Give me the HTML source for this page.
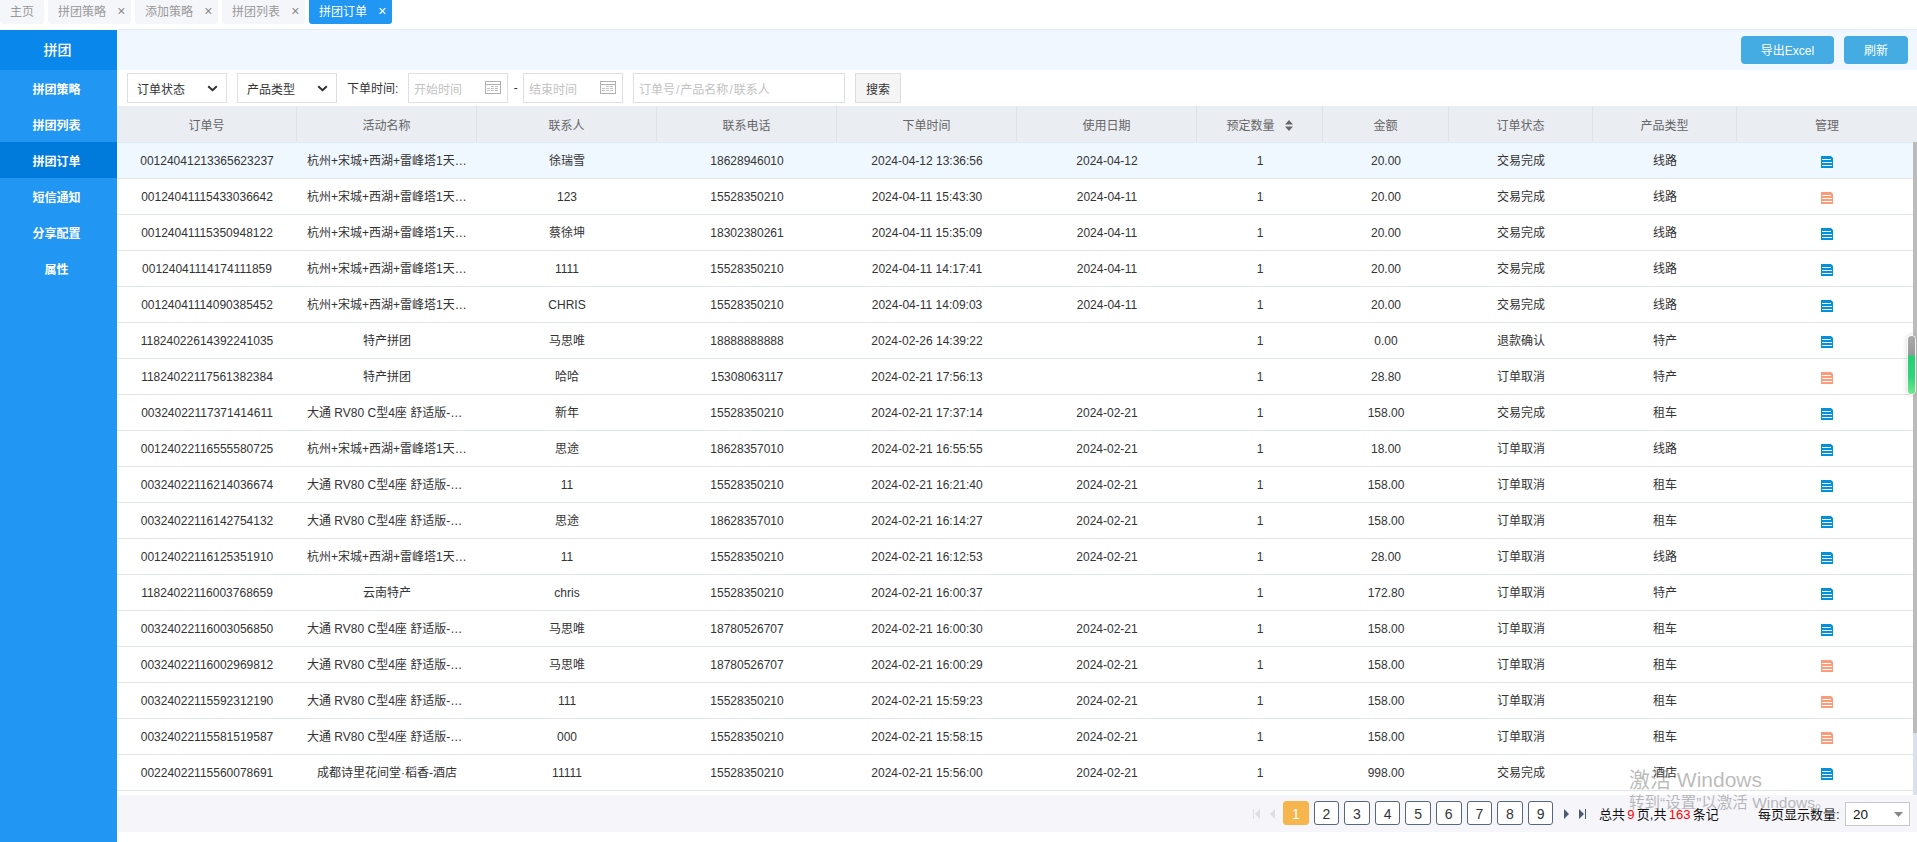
<!DOCTYPE html>
<html lang="zh-CN">
<head>
<meta charset="utf-8">
<title>拼团订单</title>
<style>
*{box-sizing:border-box;margin:0;padding:0}
html,body{width:1917px;height:842px;overflow:hidden;background:#fff}
body{font-family:"Liberation Sans","Noto Sans CJK SC",sans-serif;font-size:12px;color:#333;position:relative}
.abs{position:absolute}
/* tabs */
.tabs{position:absolute;left:0;top:0;height:24px;width:1917px}
.tab{position:absolute;top:0;height:24px;width:83px;background:#f5f6fa;color:#999;border-radius:0 0 3px 3px;line-height:24px;padding-left:10px;white-space:nowrap}
.tab .x{position:absolute;right:5.5px;top:0;font-size:14px;color:#8a8a8a;line-height:22px}
.tab.on{background:#2196f3;color:#fff}
.tab.on .x{color:#fff}
/* sidebar */
.side{position:absolute;left:0;top:30px;width:117px;height:812px;background:#2196f3;color:#fff;text-align:center}
.side .hd{height:40px;line-height:41px;font-size:14px;font-weight:500;background:#0a87eb;padding-right:2px}
.side .it{height:36px;line-height:41px;font-weight:bold;font-size:12px;padding-right:4px}
.side .it.on{background:#007adb}
/* top bar */
.top{position:absolute;left:117px;top:29px;width:1800px;height:41px;background:#f0f7ff;border-top:1px solid #e3ebf6}
.btn{position:absolute;top:6px;height:28px;line-height:31px;background:#44ace3;color:#fff;border-radius:4px;text-align:center}
/* filter */
.sel,.inp,.sbtn{position:absolute;top:73px;height:30px;border:1px solid #dcdfe5;background:#fff;line-height:32px}
.sel{padding-left:9px;color:#333}
.inp{padding-left:5px;color:#c2c2c2;line-height:32px}
.sbtn{background:#f5f5f5;border-color:#ddd;text-align:center;color:#333}
.lbl{position:absolute;top:73px;line-height:32px;color:#333}
/* table */
.thead{position:absolute;left:117px;top:106px;width:1800px;height:36px;background:#eaedf2}
.thead div{position:absolute;top:0;height:36px;line-height:41px;text-align:center;color:#666;border-right:1px solid #dfe2e8}
.tb{position:absolute;left:117px;top:142px;width:1800px;height:653px;overflow:hidden;border-top:1px solid #e0ebf5}
table{border-collapse:separate;border-spacing:0;table-layout:fixed;width:1800px}
td{height:36px;border-bottom:1px solid #e0e5ea;text-align:center;padding:2px 10px 0;white-space:nowrap;overflow:hidden;color:#333;line-height:33px}
td.l{text-align:left}
tr.hl td{background:#f0f8ff}
.ic{display:inline-block;vertical-align:middle;position:relative;top:0px}
.ic.b path{fill:#0092dc}
.ic.o path{fill:#fc9b78}
.ic path.w{fill:#fff !important}
/* scrollbar */
.track{position:absolute;left:1913px;top:142px;width:4px;height:653px;background:#dae1ea}
.thumb{position:absolute;left:1913px;top:142px;width:4px;height:591px;background:#bbb}
/* pager */
.pager{position:absolute;left:117px;top:795px;width:1800px;height:37px;background:#f5f5fa}
.pg{position:absolute;top:6px;height:24px;width:25.5px;border:1px solid #56667b;border-radius:3px;background:#fff;text-align:center;font-size:14px;line-height:24px;color:#333}
.pg.on{background:#f7b54e;border-color:#f7b54e;color:#fff}
.ptxt{position:absolute;top:6px;line-height:27px;font-size:13px;color:#111;white-space:nowrap}
.ptxt b{font-weight:normal;color:#f00;padding:0 2.3px}
i{font-style:normal;padding:0 1px}
.wm{position:absolute;color:rgba(120,120,120,.5);white-space:nowrap}
</style>
</head>
<body>
<div class="tabs">
  <div class="tab" style="left:0;width:44px">主页</div>
  <div class="tab" style="left:48px">拼团策略<span class="x">×</span></div>
  <div class="tab" style="left:135px">添加策略<span class="x">×</span></div>
  <div class="tab" style="left:222px">拼团列表<span class="x">×</span></div>
  <div class="tab on" style="left:309px">拼团订单<span class="x">×</span></div>
</div>

<div class="side">
  <div class="hd">拼团</div>
  <div class="it">拼团策略</div>
  <div class="it">拼团列表</div>
  <div class="it on">拼团订单</div>
  <div class="it">短信通知</div>
  <div class="it">分享配置</div>
  <div class="it">属性</div>
</div>

<div class="top">
  <div class="btn" style="left:1624px;width:93px">导出Excel</div>
  <div class="btn" style="left:1727px;width:64px">刷新</div>
</div>

<div class="sel" style="left:127px;width:100px">订单状态<svg class="abs" style="left:78.8px;top:10.6px" width="11" height="8" viewBox="0 0 11 8"><path d="M1.2 1.2L5.5 5.3L9.8 1.2" fill="none" stroke="#2e2e2e" stroke-width="1.9"/></svg></div>
<div class="sel" style="left:237px;width:100px">产品类型<svg class="abs" style="left:78.8px;top:10.6px" width="11" height="8" viewBox="0 0 11 8"><path d="M1.2 1.2L5.5 5.3L9.8 1.2" fill="none" stroke="#2e2e2e" stroke-width="1.9"/></svg></div>
<div class="lbl" style="left:347px">下单时间:</div>
<div class="inp" style="left:408px;width:100px">开始时间<svg class="abs cal" style="left:76px;top:7px" width="16" height="13" viewBox="0 0 16 13"><rect x=".5" y=".5" width="15" height="12" fill="#fff" stroke="#b0b0b0"/><path d="M1 3.5H15" stroke="#b0b0b0"/><path d="M6 5.5H9M10 5.5H13M2 7.5H5M6 7.5H9M10 7.5H13M2 9.5H5M6 9.5H9M10 9.5H13" stroke="#c4c4c4"/></svg></div>
<div class="lbl" style="left:513.7px;top:72px">-</div>
<div class="inp" style="left:523px;width:100px">结束时间<svg class="abs cal" style="left:76px;top:7px" width="16" height="13" viewBox="0 0 16 13"><rect x=".5" y=".5" width="15" height="12" fill="#fff" stroke="#b0b0b0"/><path d="M1 3.5H15" stroke="#b0b0b0"/><path d="M6 5.5H9M10 5.5H13M2 7.5H5M6 7.5H9M10 7.5H13M2 9.5H5M6 9.5H9M10 9.5H13" stroke="#c4c4c4"/></svg></div>
<div class="inp" style="left:633px;width:212px">订单号<i>/</i>产品名称<i>/</i>联系人</div>
<div class="sbtn" style="left:855px;width:46px">搜索</div>

<div class="thead">
  <div style="left:0;width:180px">订单号</div>
  <div style="left:180px;width:180px">活动名称</div>
  <div style="left:360px;width:180px">联系人</div>
  <div style="left:540px;width:180px">联系电话</div>
  <div style="left:720px;width:180px">下单时间</div>
  <div style="left:900px;width:180px">使用日期</div>
  <div style="left:1080px;width:126px">预定数量<svg style="display:inline-block;margin-left:10px;vertical-align:middle;position:relative;top:-1px" width="8" height="11" viewBox="0 0 8 11"><path d="M4 0L8 4.5H0ZM0 6.5H8L4 11Z" fill="#666"/></svg></div>
  <div style="left:1206px;width:126px">金额</div>
  <div style="left:1332px;width:144px">订单状态</div>
  <div style="left:1476px;width:144px">产品类型</div>
  <div style="left:1620px;width:180px;border-right:0">管理</div>
</div>

<div class="tb">
<table>
<colgroup><col style="width:180px"><col style="width:180px"><col style="width:180px"><col style="width:180px"><col style="width:180px"><col style="width:180px"><col style="width:126px"><col style="width:126px"><col style="width:144px"><col style="width:144px"><col style="width:180px"></colgroup>
<tr class="hl"><td>00124041213365623237</td><td class="l">杭州+宋城+西湖+雷峰塔1天…</td><td>徐瑞雪</td><td>18628946010</td><td>2024-04-12 13:36:56</td><td>2024-04-12</td><td>1</td><td>20.00</td><td>交易完成</td><td>线路</td><td><svg class="ic b" width="12" height="12" viewBox="0 0 12 12"><path d="M0 0H10L12 2V12H0Z"/><path class="w" d="M1 3H10V4H1ZM1 6H11V7H1ZM1 9H11V10H1Z"/></svg></td></tr>
<tr><td>00124041115433036642</td><td class="l">杭州+宋城+西湖+雷峰塔1天…</td><td>123</td><td>15528350210</td><td>2024-04-11 15:43:30</td><td>2024-04-11</td><td>1</td><td>20.00</td><td>交易完成</td><td>线路</td><td><svg class="ic o" width="12" height="12" viewBox="0 0 12 12"><path d="M0 0H10L12 2V12H0Z"/><path class="w" d="M1 3H10V4H1ZM1 6H11V7H1ZM1 9H11V10H1Z"/></svg></td></tr>
<tr><td>00124041115350948122</td><td class="l">杭州+宋城+西湖+雷峰塔1天…</td><td>蔡徐坤</td><td>18302380261</td><td>2024-04-11 15:35:09</td><td>2024-04-11</td><td>1</td><td>20.00</td><td>交易完成</td><td>线路</td><td><svg class="ic b" width="12" height="12" viewBox="0 0 12 12"><path d="M0 0H10L12 2V12H0Z"/><path class="w" d="M1 3H10V4H1ZM1 6H11V7H1ZM1 9H11V10H1Z"/></svg></td></tr>
<tr><td>00124041114174111859</td><td class="l">杭州+宋城+西湖+雷峰塔1天…</td><td>1111</td><td>15528350210</td><td>2024-04-11 14:17:41</td><td>2024-04-11</td><td>1</td><td>20.00</td><td>交易完成</td><td>线路</td><td><svg class="ic b" width="12" height="12" viewBox="0 0 12 12"><path d="M0 0H10L12 2V12H0Z"/><path class="w" d="M1 3H10V4H1ZM1 6H11V7H1ZM1 9H11V10H1Z"/></svg></td></tr>
<tr><td>00124041114090385452</td><td class="l">杭州+宋城+西湖+雷峰塔1天…</td><td>CHRIS</td><td>15528350210</td><td>2024-04-11 14:09:03</td><td>2024-04-11</td><td>1</td><td>20.00</td><td>交易完成</td><td>线路</td><td><svg class="ic b" width="12" height="12" viewBox="0 0 12 12"><path d="M0 0H10L12 2V12H0Z"/><path class="w" d="M1 3H10V4H1ZM1 6H11V7H1ZM1 9H11V10H1Z"/></svg></td></tr>
<tr><td>11824022614392241035</td><td>特产拼团</td><td>马思唯</td><td>18888888888</td><td>2024-02-26 14:39:22</td><td></td><td>1</td><td>0.00</td><td>退款确认</td><td>特产</td><td><svg class="ic b" width="12" height="12" viewBox="0 0 12 12"><path d="M0 0H10L12 2V12H0Z"/><path class="w" d="M1 3H10V4H1ZM1 6H11V7H1ZM1 9H11V10H1Z"/></svg></td></tr>
<tr><td>11824022117561382384</td><td>特产拼团</td><td>哈哈</td><td>15308063117</td><td>2024-02-21 17:56:13</td><td></td><td>1</td><td>28.80</td><td>订单取消</td><td>特产</td><td><svg class="ic o" width="12" height="12" viewBox="0 0 12 12"><path d="M0 0H10L12 2V12H0Z"/><path class="w" d="M1 3H10V4H1ZM1 6H11V7H1ZM1 9H11V10H1Z"/></svg></td></tr>
<tr><td>00324022117371414611</td><td class="l">大通 RV80 C型4座 舒适版-…</td><td>新年</td><td>15528350210</td><td>2024-02-21 17:37:14</td><td>2024-02-21</td><td>1</td><td>158.00</td><td>交易完成</td><td>租车</td><td><svg class="ic b" width="12" height="12" viewBox="0 0 12 12"><path d="M0 0H10L12 2V12H0Z"/><path class="w" d="M1 3H10V4H1ZM1 6H11V7H1ZM1 9H11V10H1Z"/></svg></td></tr>
<tr><td>00124022116555580725</td><td class="l">杭州+宋城+西湖+雷峰塔1天…</td><td>思途</td><td>18628357010</td><td>2024-02-21 16:55:55</td><td>2024-02-21</td><td>1</td><td>18.00</td><td>订单取消</td><td>线路</td><td><svg class="ic b" width="12" height="12" viewBox="0 0 12 12"><path d="M0 0H10L12 2V12H0Z"/><path class="w" d="M1 3H10V4H1ZM1 6H11V7H1ZM1 9H11V10H1Z"/></svg></td></tr>
<tr><td>00324022116214036674</td><td class="l">大通 RV80 C型4座 舒适版-…</td><td>11</td><td>15528350210</td><td>2024-02-21 16:21:40</td><td>2024-02-21</td><td>1</td><td>158.00</td><td>订单取消</td><td>租车</td><td><svg class="ic b" width="12" height="12" viewBox="0 0 12 12"><path d="M0 0H10L12 2V12H0Z"/><path class="w" d="M1 3H10V4H1ZM1 6H11V7H1ZM1 9H11V10H1Z"/></svg></td></tr>
<tr><td>00324022116142754132</td><td class="l">大通 RV80 C型4座 舒适版-…</td><td>思途</td><td>18628357010</td><td>2024-02-21 16:14:27</td><td>2024-02-21</td><td>1</td><td>158.00</td><td>订单取消</td><td>租车</td><td><svg class="ic b" width="12" height="12" viewBox="0 0 12 12"><path d="M0 0H10L12 2V12H0Z"/><path class="w" d="M1 3H10V4H1ZM1 6H11V7H1ZM1 9H11V10H1Z"/></svg></td></tr>
<tr><td>00124022116125351910</td><td class="l">杭州+宋城+西湖+雷峰塔1天…</td><td>11</td><td>15528350210</td><td>2024-02-21 16:12:53</td><td>2024-02-21</td><td>1</td><td>28.00</td><td>订单取消</td><td>线路</td><td><svg class="ic b" width="12" height="12" viewBox="0 0 12 12"><path d="M0 0H10L12 2V12H0Z"/><path class="w" d="M1 3H10V4H1ZM1 6H11V7H1ZM1 9H11V10H1Z"/></svg></td></tr>
<tr><td>11824022116003768659</td><td>云南特产</td><td>chris</td><td>15528350210</td><td>2024-02-21 16:00:37</td><td></td><td>1</td><td>172.80</td><td>订单取消</td><td>特产</td><td><svg class="ic b" width="12" height="12" viewBox="0 0 12 12"><path d="M0 0H10L12 2V12H0Z"/><path class="w" d="M1 3H10V4H1ZM1 6H11V7H1ZM1 9H11V10H1Z"/></svg></td></tr>
<tr><td>00324022116003056850</td><td class="l">大通 RV80 C型4座 舒适版-…</td><td>马思唯</td><td>18780526707</td><td>2024-02-21 16:00:30</td><td>2024-02-21</td><td>1</td><td>158.00</td><td>订单取消</td><td>租车</td><td><svg class="ic b" width="12" height="12" viewBox="0 0 12 12"><path d="M0 0H10L12 2V12H0Z"/><path class="w" d="M1 3H10V4H1ZM1 6H11V7H1ZM1 9H11V10H1Z"/></svg></td></tr>
<tr><td>00324022116002969812</td><td class="l">大通 RV80 C型4座 舒适版-…</td><td>马思唯</td><td>18780526707</td><td>2024-02-21 16:00:29</td><td>2024-02-21</td><td>1</td><td>158.00</td><td>订单取消</td><td>租车</td><td><svg class="ic o" width="12" height="12" viewBox="0 0 12 12"><path d="M0 0H10L12 2V12H0Z"/><path class="w" d="M1 3H10V4H1ZM1 6H11V7H1ZM1 9H11V10H1Z"/></svg></td></tr>
<tr><td>00324022115592312190</td><td class="l">大通 RV80 C型4座 舒适版-…</td><td>111</td><td>15528350210</td><td>2024-02-21 15:59:23</td><td>2024-02-21</td><td>1</td><td>158.00</td><td>订单取消</td><td>租车</td><td><svg class="ic o" width="12" height="12" viewBox="0 0 12 12"><path d="M0 0H10L12 2V12H0Z"/><path class="w" d="M1 3H10V4H1ZM1 6H11V7H1ZM1 9H11V10H1Z"/></svg></td></tr>
<tr><td>00324022115581519587</td><td class="l">大通 RV80 C型4座 舒适版-…</td><td>000</td><td>15528350210</td><td>2024-02-21 15:58:15</td><td>2024-02-21</td><td>1</td><td>158.00</td><td>订单取消</td><td>租车</td><td><svg class="ic o" width="12" height="12" viewBox="0 0 12 12"><path d="M0 0H10L12 2V12H0Z"/><path class="w" d="M1 3H10V4H1ZM1 6H11V7H1ZM1 9H11V10H1Z"/></svg></td></tr>
<tr><td>00224022115560078691</td><td>成都诗里花间堂·稻香-酒店</td><td>11111</td><td>15528350210</td><td>2024-02-21 15:56:00</td><td>2024-02-21</td><td>1</td><td>998.00</td><td>交易完成</td><td>酒店</td><td><svg class="ic b" width="12" height="12" viewBox="0 0 12 12"><path d="M0 0H10L12 2V12H0Z"/><path class="w" d="M1 3H10V4H1ZM1 6H11V7H1ZM1 9H11V10H1Z"/></svg></td></tr>
<tr><td>&nbsp;</td><td></td><td></td><td></td><td></td><td></td><td></td><td></td><td></td><td></td><td></td></tr>
</table>
</div>
<div class="track"></div><div class="thumb"></div>

<div class="pager">
  <svg class="abs" style="left:1136px;top:14px" width="7" height="10" viewBox="0 0 7 10"><path d="M0 0H1V10H0ZM7 0V10L2 5Z" fill="#dedede"/></svg>
  <svg class="abs" style="left:1153px;top:14px" width="5" height="10" viewBox="0 0 5 10"><path d="M5 0V10L0 5Z" fill="#dedede"/></svg>
  <div class="pg on" style="left:1166px;width:26px">1</div>
  <div class="pg" style="left:1196.6px">2</div>
  <div class="pg" style="left:1227.2px">3</div>
  <div class="pg" style="left:1257.8px">4</div>
  <div class="pg" style="left:1288.4px">5</div>
  <div class="pg" style="left:1319px">6</div>
  <div class="pg" style="left:1349.6px">7</div>
  <div class="pg" style="left:1380.2px">8</div>
  <div class="pg" style="left:1410.8px">9</div>
  <svg class="abs" style="left:1447px;top:14px" width="5" height="10" viewBox="0 0 5 10"><path d="M0 0V10L5 5Z" fill="#4a5b72"/></svg>
  <svg class="abs" style="left:1462px;top:14px" width="7" height="10" viewBox="0 0 7 10"><path d="M0 0V10L5 5ZM6 0H7V10H6Z" fill="#4a5b72"/></svg>
  <div class="ptxt" style="left:1482px">总共<b>9</b>页,共<b>163</b>条记</div>
  <div class="ptxt" style="left:1641px">每页显示数量:</div>
  <div class="abs" style="left:1728px;top:7px;width:65px;height:24px;border:1px solid #c8c8c8;background:#fff;font-size:13.5px;line-height:23px;padding-left:7px;color:#111">20<svg class="abs" style="left:48px;top:9px" width="9" height="5" viewBox="0 0 9 5"><path d="M0 0H9L4.5 5Z" fill="#888"/></svg></div>
</div>

<div class="wm" style="left:1629px;top:766.5px;font-size:21px;line-height:26px">激活 Windows</div>
<div class="wm" style="left:1629px;top:793px;font-size:15.5px;line-height:20px">转到“设置”以激活 Windows。</div>

<!-- green widget -->
<div class="abs" style="left:1908px;top:336px;width:7px;height:58px;border-radius:4px;background:linear-gradient(#aaa 0,#999 33%,#25cf73 34%,#2fd47a 70%,#6ee98a 100%);box-shadow:0 0 0 1px rgba(255,255,255,.85),0 0 5px 1px rgba(0,0,0,.18)"></div>
</body>
</html>
